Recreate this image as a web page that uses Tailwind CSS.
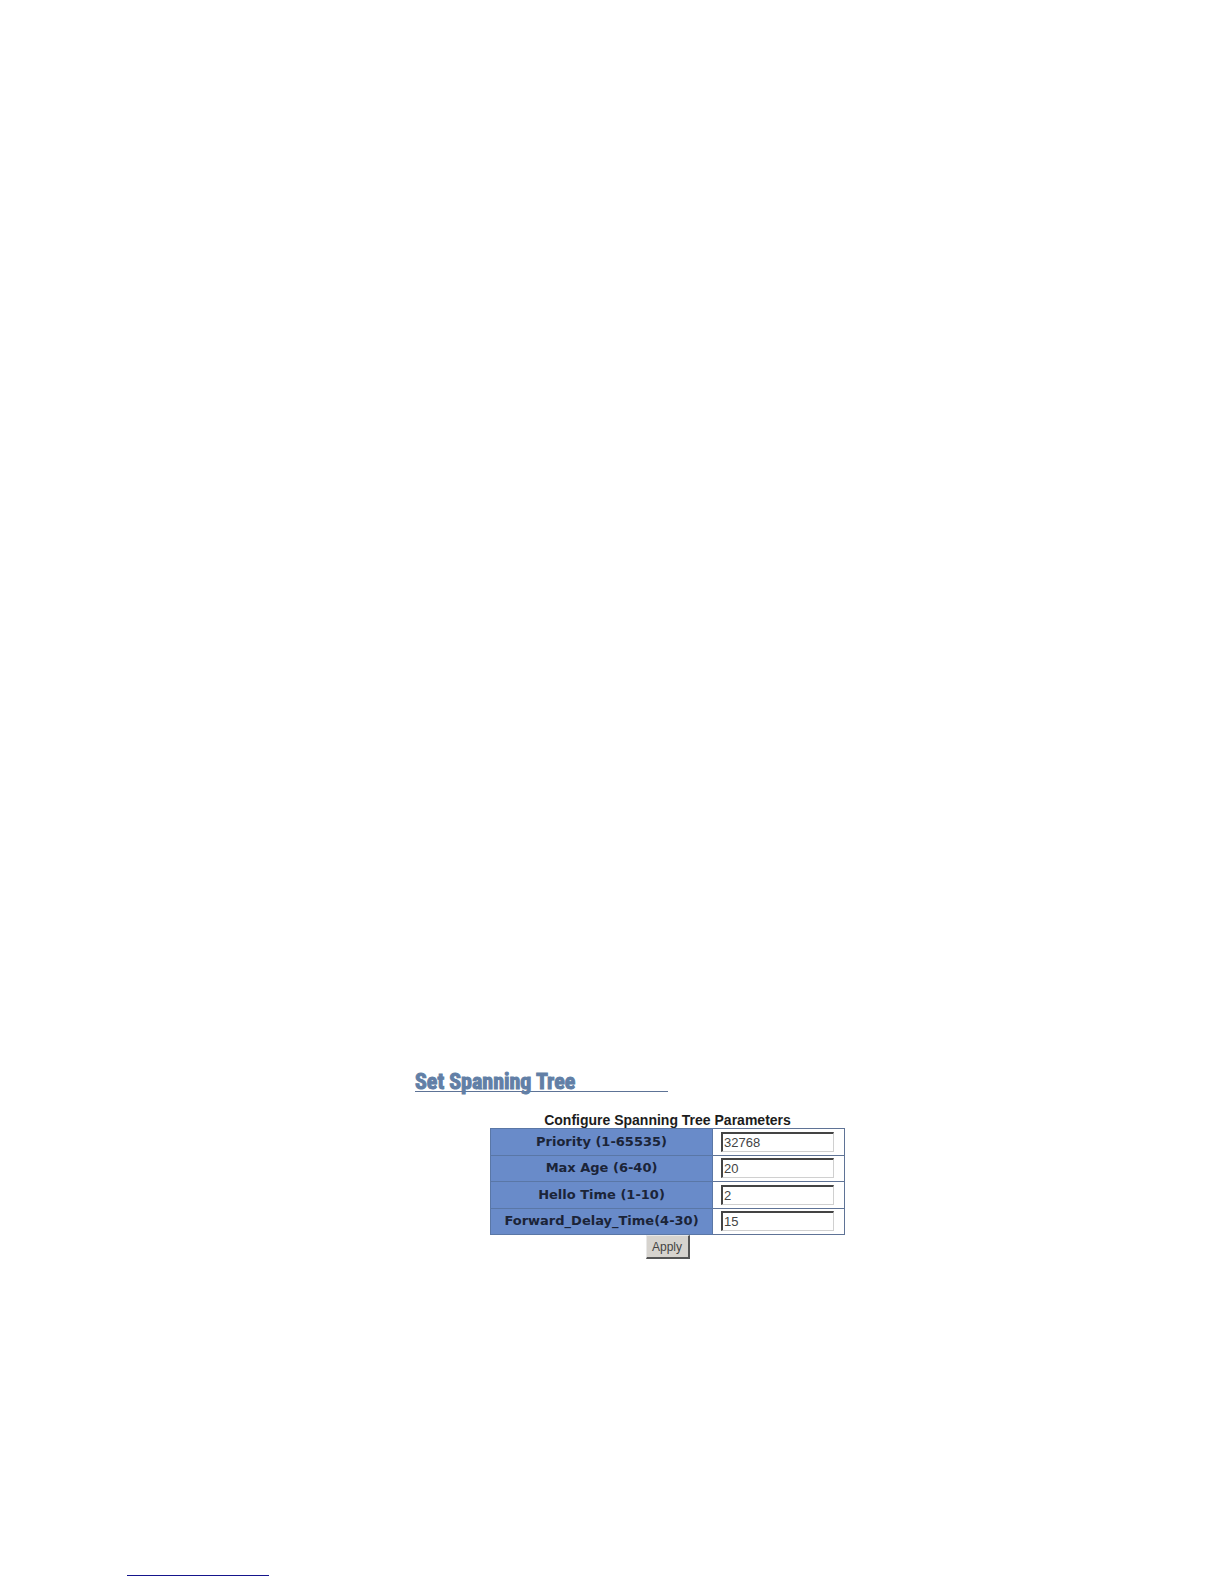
<!doctype html>
<html lang="en">
  <head>
    <meta charset="UTF-8" />
    <meta name="viewport" content="width=device-width, initial-scale=1.0" />
    <title>Set Spanning Tree</title>
    <script src="https://cdn.jsdelivr.net/npm/@tailwindcss/browser@4"></script>
  </head>
  <body class="bg-white font-['Liberation_Sans',Arial,sans-serif]">
    <div class="flex flex-col min-h-screen pt-[1073px] pb-2">
      <main class="flex flex-col pl-[415px] pr-[304px]">
        <h1
          class="w-1/2 border-b border-[#5d7396] text-[22px] leading-[18px] font-bold text-[#627fa6] font-[Impact,'Roboto_Condensed','Liberation_Sans',sans-serif] [-webkit-text-stroke:1px_#627fa6]"
        >
          Set Spanning Tree
        </h1>
        <form class="flex flex-col items-center mt-5">
          <table class="w-[355px] h-[107px] border-collapse">
            <caption class="text-[14px] leading-4 font-bold text-[#1c1c1c]">
              Configure Spanning Tree Parameters
            </caption>
            <tbody>
              <tr>
                <th class="w-[222px] border border-[#5a77a6] bg-[#698bc9] text-[13px] leading-4 text-[#1b2438] font-['DejaVu_Sans',Verdana,sans-serif]">
                  <label for="priority">Priority (1-65535)</label>
                </th>
                <td class="border border-[#5f7396] pl-2">
                  <input id="priority" value="32768" class="block w-[113px] h-5 pl-px border-t-2 border-l-2 border-r border-b border-t-[#444] border-l-[#444] border-r-[#d0d0d0] border-b-[#d0d0d0] text-[13px] text-[#444]" />
                </td>
              </tr>
              <tr>
                <th class="border border-[#5a77a6] bg-[#698bc9] text-[13px] leading-4 text-[#1b2438] font-['DejaVu_Sans',Verdana,sans-serif]">
                  <label for="max-age">Max Age (6-40)</label>
                </th>
                <td class="border border-[#5f7396] pl-2">
                  <input id="max-age" value="20" class="block w-[113px] h-5 pl-px border-t-2 border-l-2 border-r border-b border-t-[#444] border-l-[#444] border-r-[#d0d0d0] border-b-[#d0d0d0] text-[13px] text-[#444]" />
                </td>
              </tr>
              <tr>
                <th class="border border-[#5a77a6] bg-[#698bc9] text-[13px] leading-4 text-[#1b2438] font-['DejaVu_Sans',Verdana,sans-serif]">
                  <label for="hello-time">Hello Time (1-10)</label>
                </th>
                <td class="border border-[#5f7396] pl-2">
                  <input id="hello-time" value="2" class="block w-[113px] h-5 pl-px border-t-2 border-l-2 border-r border-b border-t-[#444] border-l-[#444] border-r-[#d0d0d0] border-b-[#d0d0d0] text-[13px] text-[#444]" />
                </td>
              </tr>
              <tr>
                <th class="border border-[#5a77a6] bg-[#698bc9] text-[13px] leading-4 text-[#1b2438] font-['DejaVu_Sans',Verdana,sans-serif]">
                  <label for="forward-delay">Forward_Delay_Time(4-30)</label>
                </th>
                <td class="border border-[#5f7396] pl-2">
                  <input id="forward-delay" value="15" class="block w-[113px] h-5 pl-px border-t-2 border-l-2 border-r border-b border-t-[#444] border-l-[#444] border-r-[#d0d0d0] border-b-[#d0d0d0] text-[13px] text-[#444]" />
                </td>
              </tr>
            </tbody>
          </table>
          <button
            type="button"
            class="w-11 h-6 border-t border-l border-r-2 border-b-2 border-t-[#e8e8e8] border-l-[#e8e8e8] border-r-[#555] border-b-[#555] bg-[#d6d3ce] text-[12px] leading-5 text-[#444]"
          >
            Apply
          </button>
        </form>
      </main>
      <footer class="mt-auto px-[127px]">
        <hr class="w-[142px] h-px border-0 bg-[#15158c]" />
      </footer>
    </div>
  </body>
</html>
